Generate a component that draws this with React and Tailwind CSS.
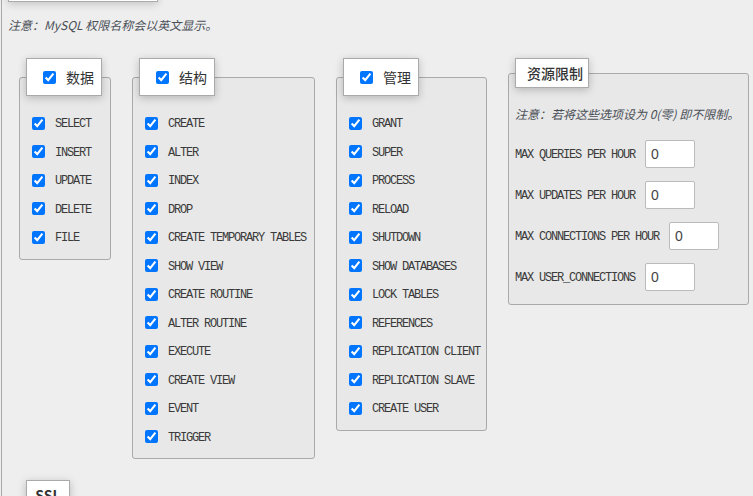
const groups = [
  { title: "数据", width: "w-[92px]", items: ["SELECT", "INSERT", "UPDATE", "DELETE", "FILE"] },
  {
    title: "结构",
    width: "w-[183px]",
    items: [
      "CREATE",
      "ALTER",
      "INDEX",
      "DROP",
      "CREATE TEMPORARY TABLES",
      "SHOW VIEW",
      "CREATE ROUTINE",
      "ALTER ROUTINE",
      "EXECUTE",
      "CREATE VIEW",
      "EVENT",
      "TRIGGER",
    ],
  },
  {
    title: "管理",
    width: "w-[151px]",
    items: [
      "GRANT",
      "SUPER",
      "PROCESS",
      "RELOAD",
      "SHUTDOWN",
      "SHOW DATABASES",
      "LOCK TABLES",
      "REFERENCES",
      "REPLICATION CLIENT",
      "REPLICATION SLAVE",
      "CREATE USER",
    ],
  },
];

const limits = [
  "MAX QUERIES PER HOUR",
  "MAX UPDATES PER HOUR",
  "MAX CONNECTIONS PER HOUR",
  "MAX USER_CONNECTIONS",
];

const cjk = "font-['Noto_Sans_CJK_SC','Noto_Sans',sans-serif]";
const mono = "font-['Liberation_Mono',monospace] text-[12px] leading-[14px] pt-[2px] tracking-[-1.2px] text-[#3a3a3a]";

function PrivGroup({ title, width, items }) {
  return (
    <fieldset className={`${width} border border-[#aaa] rounded-[3px] bg-[#e8e8e8] p-0 m-0`}>
      <legend className="ml-[6px] h-[38px] w-[76px] flex items-center pl-[16px] bg-white border border-[#aaa] shadow-[0_2px_8px_rgba(0,0,0,0.22)]">
        <input type="checkbox" defaultChecked className="m-0 w-[13px] h-[13px]" />
        <span className={`${cjk} ml-[10px] text-[14px] text-[#333]`}>{title}</span>
      </legend>
      <div className="pt-[13px] pb-[7px] pl-[12px]">
        {items.map((it) => (
          <label key={it} className="h-[28.5px] flex items-center">
            <input type="checkbox" defaultChecked className="m-0 w-[13px] h-[13px]" />
            <span className={`${mono} ml-[10px] whitespace-nowrap`}>{it}</span>
          </label>
        ))}
      </div>
    </fieldset>
  );
}

export default function App() {
  return (
    <div className="w-[753px] h-[496px] overflow-hidden bg-[#eeeeee]">
      <div className="ml-[1px] border-l border-[#aaa] h-full flow-root">
        <div className="ml-[6px] -mt-[30px] w-[150px] h-[32px] bg-white border border-[#aaa] shadow-[0_2px_8px_rgba(0,0,0,0.18)]" />
        <p className={`${cjk} italic text-[12px] leading-[17px] text-[#4a4f57] ml-[6px] mt-[13.5px]`}>
          注意：MySQL 权限名称会以英文显示。
        </p>
        <div className="flex items-start gap-[21px] ml-[17px] mt-[25.5px]">
          {groups.map((g) => (
            <PrivGroup key={g.title} {...g} />
          ))}
          <fieldset className="w-[241px] border border-[#aaa] rounded-[3px] bg-[#e8e8e8] p-0 m-0">
            <legend className={`${cjk} ml-[6px] h-[30px] w-[74px] flex items-center pl-[11px] bg-white border border-[#aaa] shadow-[0_2px_8px_rgba(0,0,0,0.22)] text-[14px] font-medium text-[#333]`}>
              资源限制
            </legend>
            <div className="pl-[6px] pt-[16.5px] pb-[13px]">
              <p className={`${cjk} italic text-[12px] leading-[17px] text-[#4a4f57]`}>
                注意：若将这些选项设为 0(零) 即不限制。
              </p>
              <div className="mt-[18.5px] flex flex-col gap-[13px]">
                {limits.map((l) => (
                  <div key={l} className="flex items-center h-[28px]">
                    <span className={`${mono} whitespace-nowrap`}>{l}</span>
                    <input
                      type="text"
                      defaultValue="0"
                      className="ml-[10px] w-[50px] h-[28px] bg-white border border-[#bbb] rounded-[2px] pl-[5px] text-[14px] text-[#444] font-['Liberation_Sans',sans-serif] outline-none"
                    />
                  </div>
                ))}
              </div>
            </div>
          </fieldset>
        </div>
        <div className={`${cjk} ml-[24px] mt-[21px] w-[44px] h-[30px] flex items-center justify-center bg-white border border-[#aaa] shadow-[0_2px_8px_rgba(0,0,0,0.22)] text-[14px] font-bold text-[#333]`}>
          SSL
        </div>
      </div>
    </div>
  );
}
